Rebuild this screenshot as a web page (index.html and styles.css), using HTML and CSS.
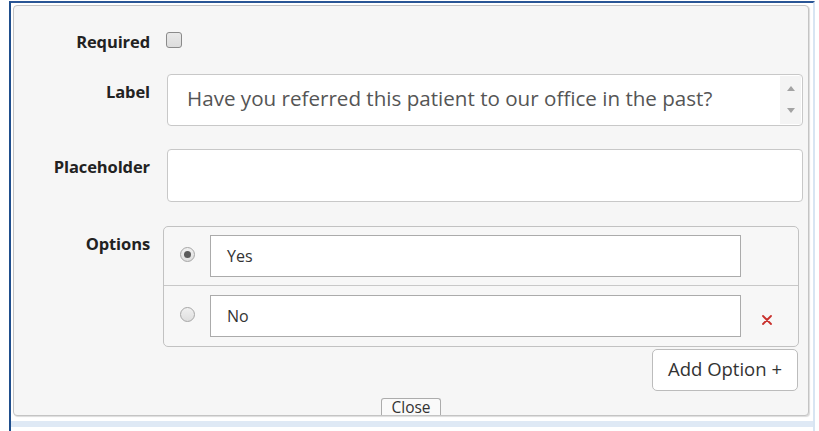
FILE: index.html
```html
<!DOCTYPE html>
<html lang="en">
<head>
<meta charset="utf-8">
<title>Edit field</title>
<link rel="stylesheet" href="styles.css">
</head>
<body>
<div class="frame">
  <div class="panel">
    <div class="field field-inline">
      <span class="field-label">Required</span>
      <span class="checkbox"></span>
    </div>

    <div class="field field-label-row">
      <span class="field-label">Label</span>
      <div class="textbox textbox-area">
        <span class="textbox-value">Have you referred this patient to our office in the past?</span>
        <span class="spinner">
          <i class="spin-arrow spin-up"></i>
          <i class="spin-arrow spin-down"></i>
        </span>
      </div>
    </div>

    <div class="field field-placeholder">
      <span class="field-label">Placeholder</span>
      <div class="textbox"></div>
    </div>

    <div class="field field-options">
      <span class="field-label">Options</span>
      <div class="options">
        <div class="option">
          <span class="radio radio-checked"></span>
          <div class="option-input">Yes</div>
          <span class="option-remove"></span>
        </div>
        <div class="option">
          <span class="radio"></span>
          <div class="option-input">No</div>
          <span class="option-remove">
            <svg width="10" height="10" viewBox="0 0 10 10" aria-hidden="true">
              <path d="M1 1 L9 9 M9 1 L1 9" stroke="#c9302c" stroke-width="1.8" stroke-linecap="round"/>
            </svg>
          </span>
        </div>
      </div>
    </div>

    <div class="actions">
      <button class="btn-add" type="button">Add Option +</button>
    </div>

    <button class="close-tab" type="button">Close</button>
  </div>
  <div class="frame-foot"></div>
</div>
</body>
</html>
```

FILE: styles.css
```css
html, body {
  margin: 0;
  padding: 0;
  background: #fff;
}

body {
  font-family: "Open Sans", "Liberation Sans", sans-serif;
  color: #333;
}

/* outer window frame */
.frame {
  box-sizing: border-box;
  margin: 1px 0 0 9px;
  width: 806px;
  height: 430px;
  border-top: 2px solid #2a5696;
  border-left: 2px solid #1f4e8c;
  border-right: 2px solid #d8e5f2;
  background: #fff;
}

.frame-foot {
  margin-top: 5px;
  height: 6px;
  background: #dfe9f5;
}

/* field editor panel */
.panel {
  box-sizing: border-box;
  margin: 2px 4px 0 2px;
  height: 411px;
  padding-top: 23px;
  border: 1px solid #c4c4c4;
  border-radius: 4px;
  background: #f6f6f6;
  box-shadow: 1px 1px 1px rgba(0, 0, 0, 0.14);
  display: flex;
  flex-direction: column;
}

.field {
  display: grid;
  grid-template-columns: 136px 1fr;
  column-gap: 13px;
  align-items: start;
}

.field-label {
  text-align: right;
  font-weight: 700;
  font-size: 16.5px;
  line-height: 20px;
  padding-top: 8px;
  color: #222;
  letter-spacing: -0.1px;
}

.field-inline {
  height: 24px;
  margin-bottom: 21px;
}

.field-inline .field-label {
  padding-top: 3px;
}

.checkbox {
  box-sizing: border-box;
  width: 16px;
  height: 16px;
  margin: 3px 0 0 3px;
  border: 1px solid #8a8a8a;
  border-radius: 3px;
  background: linear-gradient(#e9e9e9, #dcdcdc);
}

/* text inputs */
.textbox {
  box-sizing: border-box;
  height: 52px;
  margin: 0 5px 0 4px;
  border: 1px solid #c8c8c8;
  border-radius: 4px;
  background: #fff;
  display: flex;
  align-items: center;
  padding-left: 19px;
}

.field-label-row {
  margin-bottom: 23px;
}

.field-placeholder {
  margin-bottom: 24px;
}

.field-placeholder .textbox {
  height: 53px;
}

.textbox-value {
  flex: 1;
  font-size: 20.6px;
  color: #555;
  white-space: nowrap;
  margin-top: -4px;
}

.spinner {
  align-self: stretch;
  width: 21px;
  margin: 1px 1px 1px 0;
  background: #f4f4f4;
  display: flex;
  flex-direction: column;
  justify-content: space-between;
  align-items: center;
  padding: 10px 0 11px;
  box-sizing: border-box;
}

.spin-arrow {
  width: 0;
  height: 0;
  border-left: 4px solid transparent;
  border-right: 4px solid transparent;
}

.spin-up {
  border-bottom: 5px solid #a3a3a3;
}

.spin-down {
  border-top: 5px solid #a3a3a3;
}

/* options list */
.options {
  margin-right: 9px;
  border: 1px solid #c2c2c2;
  border-radius: 5px;
  background: #f7f7f7;
}

.option {
  display: flex;
  align-items: center;
  height: 60px;
  padding-left: 16px;
  box-sizing: border-box;
}

.option:first-child {
  height: 59px;
  border-bottom: 1px solid #c8c8c8;
}

.radio {
  box-sizing: border-box;
  width: 15px;
  height: 15px;
  margin-right: 15px;
  margin-bottom: 4px;
  border: 1px solid #a6a6a6;
  border-radius: 50%;
  background: linear-gradient(#f0f0f0, #dedede);
  display: flex;
  align-items: center;
  justify-content: center;
}

.radio-checked::after {
  content: "";
  width: 7px;
  height: 7px;
  border-radius: 50%;
  background: #5a5a5a;
}

.option-input {
  box-sizing: border-box;
  width: 531px;
  height: 42px;
  border: 1px solid #ababab;
  background: #fff;
  padding-left: 16px;
  display: flex;
  align-items: center;
  font-size: 16px;
  color: #333;
}

.option-remove {
  flex: 1;
  display: flex;
  justify-content: center;
  padding-right: 5px;
  margin-top: 8px;
}

/* buttons */
.actions {
  display: flex;
  justify-content: flex-end;
  margin-top: 2px;
  padding-right: 10px;
}

.btn-add {
  box-sizing: border-box;
  width: 146px;
  height: 42px;
  border: 1px solid #bcbcbc;
  border-radius: 5px;
  background: #fff;
  font-family: inherit;
  font-size: 18.5px;
  color: #333;
  padding: 0 0 4px;
}

.close-tab {
  align-self: center;
  margin-top: auto;
  box-sizing: border-box;
  height: 17px;
  width: 60px;
  padding: 0;
  border: 1px solid #acacac;
  border-bottom: none;
  border-radius: 3px 3px 0 0;
  background: #fafafa;
  font-family: inherit;
  font-size: 15.5px;
  line-height: 17px;
  color: #333;
}
```
